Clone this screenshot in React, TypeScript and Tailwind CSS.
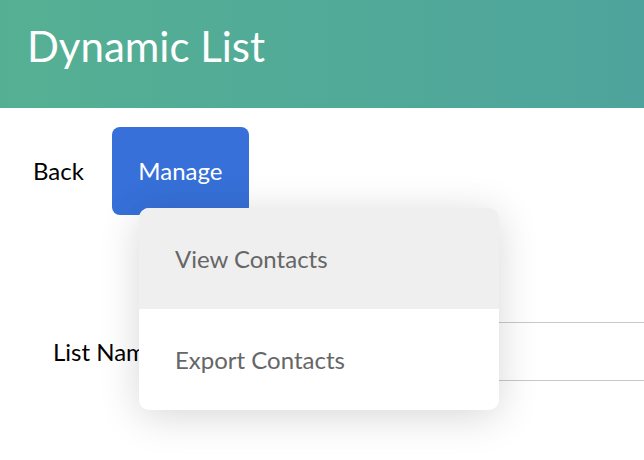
const App = () => {
  return (
    <div className="min-h-[460px] bg-white font-['Lato','Liberation_Sans',sans-serif] overflow-hidden">
      <header className="h-[108px] bg-gradient-to-r from-[#55b093] to-[#4ea49c] px-[27px] pt-[25px]">
        <h1 className="text-[42px] leading-none text-white font-normal">Dynamic List</h1>
      </header>

      <div className="flex items-center pl-[33px] pt-[19px] gap-[28px]">
        <button className="text-[24px] text-black leading-none">Back</button>
        <div className="relative">
          <button className="h-[88px] w-[137px] rounded-[8px] bg-[#3670d8] text-white text-[24px] leading-none">
            Manage
          </button>
          {/* dropdown menu */}
          <div className="absolute left-[27px] top-[81px] z-10 w-[360px] rounded-[10px] bg-white overflow-hidden shadow-[0_6px_40px_rgba(0,0,0,0.16)]">
            <div className="h-[101px] flex items-center px-[36px] bg-[#efefef] text-[#666] text-[24px]">
              View Contacts
            </div>
            <div className="h-[101px] flex items-center px-[36px] text-[#666] text-[24px]">
              Export Contacts
            </div>
          </div>
        </div>
      </div>

      <div className="flex items-center mt-[107px] pl-[53px]">
        <label className="w-[170px] shrink-0 text-[24px] text-black whitespace-nowrap">List Name</label>
        <input className="flex-1 h-[59px] border-y border-[#c8c8c8] outline-none" />
      </div>
    </div>
  )
}

export default App
